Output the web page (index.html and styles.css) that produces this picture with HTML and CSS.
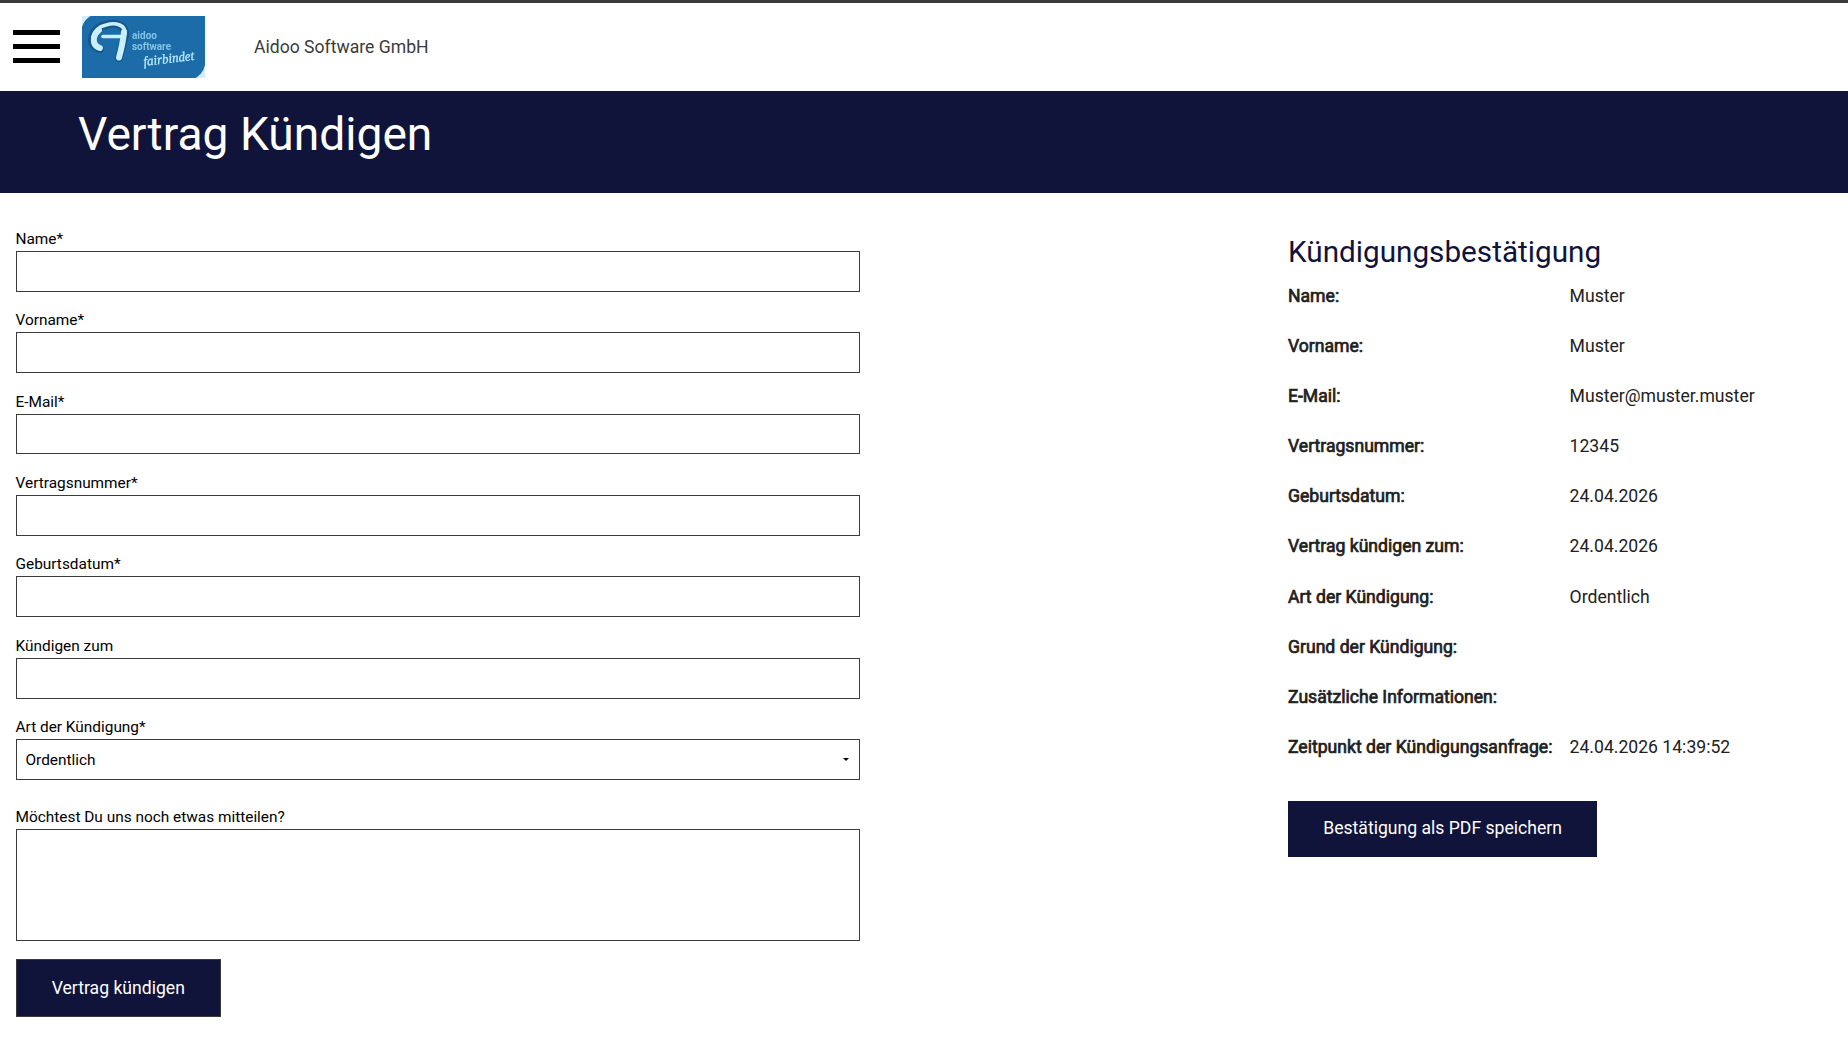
FILE: index.html
```
<!DOCTYPE html>
<html lang="de">
<head>
<meta charset="utf-8">
<title>Vertrag Kündigen</title>
<link rel="stylesheet" href="styles.css">
</head>
<body>
<header class="topbar">
  <button class="menu" type="button" aria-label="Menü"><span></span><span></span><span></span></button>
  <svg class="logo" viewBox="0 0 123 62" role="img" aria-label="Logo">
    <defs><filter id="soft" x="-5%" y="-10%" width="110%" height="120%"><feGaussianBlur stdDeviation="0.75"/></filter></defs>
    <rect width="123" height="62" fill="#1b6ca9"/>
    <g filter="url(#soft)">
      <path d="M-2 -2H12Q2 3 0 11L-2 12Z" fill="#d3eef8"/>
      <path d="M125 64H110Q121 59 123 49L125 48Z" fill="#d3eef8"/>
      <path d="M18 33C5 30 8 12 24 9C34 6 44 9 43 19L37 42" fill="none" stroke="#17598a" stroke-width="8" stroke-linecap="round" stroke-linejoin="round"/>
      <path d="M18 33C6 30 9 12 24 9C34 6 44 9 43 18" fill="none" stroke="#c9effc" stroke-width="3.6" stroke-linecap="round"/>
      <path d="M18 32C9 29 11 19 17 14" fill="none" stroke="#c9effc" stroke-width="5.8" stroke-linecap="round"/>
      <path d="M42 16Q41 27 37 41.5" fill="none" stroke="#c9effc" stroke-width="6" stroke-linecap="round"/>
      <path d="M21 20.5H41" fill="none" stroke="#c9effc" stroke-width="3.6" stroke-linecap="round"/>
      <text class="logo-name" x="50" y="23" textLength="25" lengthAdjust="spacingAndGlyphs">aidoo</text>
      <text class="logo-name" x="50" y="33.5" textLength="39" lengthAdjust="spacingAndGlyphs">software</text>
      <text class="logo-claim" x="62" y="50" textLength="51" lengthAdjust="spacingAndGlyphs" transform="rotate(-7 62 50)">fairbindet</text>
    </g>
  </svg>
  <span class="company">Aidoo Software GmbH</span>
</header>
<div class="banner"><h1>Vertrag Kündigen</h1></div>
<main class="content">
  <form class="form">
    <label class="field"><span>Name*</span><input type="text"></label>
    <label class="field"><span>Vorname*</span><input type="text"></label>
    <label class="field"><span>E-Mail*</span><input type="text"></label>
    <label class="field"><span>Vertragsnummer*</span><input type="text"></label>
    <label class="field"><span>Geburtsdatum*</span><input type="text"></label>
    <label class="field"><span>Kündigen zum</span><input type="text"></label>
    <div class="field"><span>Art der Kündigung*</span>
      <div class="select">Ordentlich<svg width="6" height="3" viewBox="0 0 6 3"><path d="M0 0H6L3 3Z"/></svg></div>
    </div>
    <label class="field message"><span>Möchtest Du uns noch etwas mitteilen?</span><textarea></textarea></label>
    <button class="button submit" type="button">Vertrag kündigen</button>
  </form>
  <section class="summary">
    <h2>Kündigungsbestätigung</h2>
    <dl>
      <dt>Name:</dt><dd>Muster</dd>
      <dt>Vorname:</dt><dd>Muster</dd>
      <dt>E-Mail:</dt><dd>Muster@muster.muster</dd>
      <dt>Vertragsnummer:</dt><dd>12345</dd>
      <dt>Geburtsdatum:</dt><dd>24.04.2026</dd>
      <dt>Vertrag kündigen zum:</dt><dd>24.04.2026</dd>
      <dt>Art der Kündigung:</dt><dd>Ordentlich</dd>
      <dt>Grund der Kündigung:</dt><dd></dd>
      <dt>Zusätzliche Informationen:</dt><dd></dd>
      <dt>Zeitpunkt der Kündigungsanfrage:</dt><dd>24.04.2026 14:39:52</dd>
    </dl>
    <button class="button" type="button">Bestätigung als PDF speichern</button>
  </section>
</main>
</body>
</html>
```

FILE: styles.css
```
* { box-sizing: border-box; }
body {
  margin: 0;
  background: #fff;
  color: #212121;
  font: 17.6px/25px Roboto, sans-serif;
}
h1, h2, dl, dd { margin: 0; font-weight: 400; }

.topbar {
  display: flex;
  align-items: flex-start;
  height: 91px;
  border-top: 3px solid #3c3b3b;
  padding-left: 13px;
}
.menu {
  display: flex;
  flex-direction: column;
  gap: 9px;
  width: 47px;
  margin: 27px 22px 0 0;
  padding: 0;
  border: 0;
  background: none;
}
.menu span { width: 47px; height: 5px; background: #000; }
.logo { width: 123px; height: 62px; margin-top: 13px; }
.logo-name { font: 700 10.5px Roboto, sans-serif; fill: #83c4e4; }
.logo-claim { font: italic 400 13.5px "Liberation Serif", serif; fill: #b8e8fa; stroke: #b8e8fa; stroke-width: 0.3px; }
.company { margin: 32px 0 0 49px; color: #3c3b3b; }

.banner { height: 102px; padding: 16px 0 0 78px; background: #10133a; color: #fff; }
.banner h1 { font-size: 46.15px; line-height: 54px; }

.content { display: flex; justify-content: space-between; padding: 35.8px 0 0 15.5px; }
.form { width: 844px; }
.field {
  display: block;
  height: 81.38px;
  color: #000;
  font-size: 15.4px;
  line-height: 20px;
}
.field > span { display: block; height: 22px; }
.field input, .select, .field textarea {
  display: block;
  width: 100%;
  height: 40.88px;
  margin: 0;
  padding: 0 9px;
  border: 1px solid #3c3b3b;
  border-radius: 0;
  background: #fff;
  font: inherit;
}
.select { display: flex; align-items: center; justify-content: space-between; padding: 1px 10px 0 9px; }
.message { height: 152px; margin-top: 8.7px; }
.field textarea { height: 112px; resize: none; }
.button {
  height: 56px;
  padding: 0 35.2px 1px;
  border: 0;
  background: #10133a;
  color: #fff;
  font: inherit;
}
.submit { height: 58px; padding-bottom: 0; border: 1px solid #3c3b3b; }

.summary { width: 560px; padding-top: 5.2px; }
.summary h2 { color: #10133a; font-size: 29.7px; line-height: 36px; }
.summary dl {
  display: grid;
  grid-template-columns: 281.6px 1fr;
  grid-template-rows: repeat(5, 50px) 51px repeat(4, 50px);
  margin: 14px 0 16px;
}
.summary dt { -webkit-text-stroke: 0.7px #212121; }
```
